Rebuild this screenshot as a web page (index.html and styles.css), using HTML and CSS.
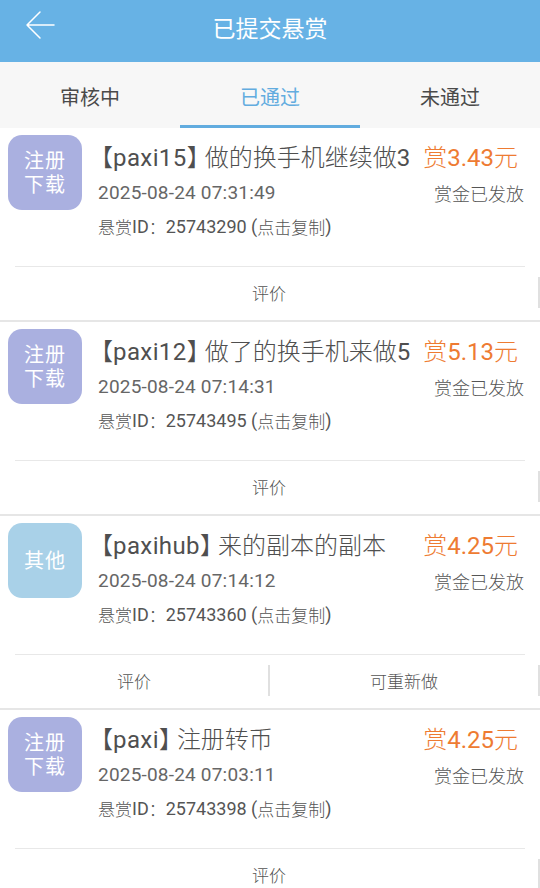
FILE: index.html
```html
<!DOCTYPE html>
<html lang="zh-CN">
<head>
<meta charset="UTF-8">
<meta name="viewport" content="width=device-width, initial-scale=1.0">
<title>已提交悬赏</title>
<link rel="stylesheet" href="styles.css">
</head>
<body>

<div class="topbar">
  <a class="back" href="#">
    <svg width="32" height="30" viewBox="0 0 32 30">
      <path d="M16 2 L3 15 L16 28 M3 15 L30 15" fill="none" stroke="#fff" stroke-width="1.5" stroke-linecap="round" stroke-linejoin="round"/>
    </svg>
  </a>
  <h1>已提交悬赏</h1>
</div>

<div class="tabs">
  <div class="tab">审核中</div>
  <div class="tab active">已通过</div>
  <div class="tab">未通过</div>
</div>

<div class="list">

  <div class="card">
    <div class="card-body">
      <div class="badge badge-reg">注册<br>下载</div>
      <div class="info">
        <div class="row row-title">
          <span class="title"><span class="br-l">【</span><span class="lat">paxi15</span><span class="br-r">】</span>做的换手机继续做<span class="lat">3</span></span>
          <span class="reward">赏<span class="lat">3.43</span>元</span>
        </div>
        <div class="row row-date">
          <span class="date">2025-08-24 07:31:49</span>
          <span class="status">赏金已发放</span>
        </div>
        <div class="row row-id">悬赏<span class="num">ID</span>：<span class="num">25743290 (</span>点击复制<span class="num">)</span></div>
      </div>
    </div>
    <div class="divider"></div>
    <div class="actions">
      <div class="action">评价</div>
    </div>
  </div>

  <div class="card">
    <div class="card-body">
      <div class="badge badge-reg">注册<br>下载</div>
      <div class="info">
        <div class="row row-title">
          <span class="title"><span class="br-l">【</span><span class="lat">paxi12</span><span class="br-r">】</span>做了的换手机来做<span class="lat">5</span></span>
          <span class="reward">赏<span class="lat">5.13</span>元</span>
        </div>
        <div class="row row-date">
          <span class="date">2025-08-24 07:14:31</span>
          <span class="status">赏金已发放</span>
        </div>
        <div class="row row-id">悬赏<span class="num">ID</span>：<span class="num">25743495 (</span>点击复制<span class="num">)</span></div>
      </div>
    </div>
    <div class="divider"></div>
    <div class="actions">
      <div class="action">评价</div>
    </div>
  </div>

  <div class="card">
    <div class="card-body">
      <div class="badge badge-other">其他</div>
      <div class="info">
        <div class="row row-title">
          <span class="title"><span class="br-l">【</span><span class="lat">paxihub</span><span class="br-r">】</span>来的副本的副本</span>
          <span class="reward">赏<span class="lat">4.25</span>元</span>
        </div>
        <div class="row row-date">
          <span class="date">2025-08-24 07:14:12</span>
          <span class="status">赏金已发放</span>
        </div>
        <div class="row row-id">悬赏<span class="num">ID</span>：<span class="num">25743360 (</span>点击复制<span class="num">)</span></div>
      </div>
    </div>
    <div class="divider"></div>
    <div class="actions">
      <div class="action">评价</div>
      <div class="action">可重新做</div>
    </div>
  </div>

  <div class="card">
    <div class="card-body">
      <div class="badge badge-reg">注册<br>下载</div>
      <div class="info">
        <div class="row row-title">
          <span class="title"><span class="br-l">【</span><span class="lat">paxi</span><span class="br-r">】</span>注册转币</span>
          <span class="reward">赏<span class="lat">4.25</span>元</span>
        </div>
        <div class="row row-date">
          <span class="date">2025-08-24 07:03:11</span>
          <span class="status">赏金已发放</span>
        </div>
        <div class="row row-id">悬赏<span class="num">ID</span>：<span class="num">25743398 (</span>点击复制<span class="num">)</span></div>
      </div>
    </div>
    <div class="divider"></div>
    <div class="actions">
      <div class="action">评价</div>
    </div>
  </div>

</div>

</body>
</html>
```

FILE: styles.css
```css
body {
  font-family: Roboto, "Noto Sans CJK SC", sans-serif;
  font-weight: 300;
  margin: 0;
  padding: 0;
  background-color: #fff;
  color: #555;
}
.topbar {
  position: relative;
  height: 62px;
  background-color: #67b2e5;
  display: flex;
  align-items: center;
  justify-content: center;
}
.topbar h1 {
  margin: 0;
  font-size: 23px;
  font-weight: normal;
  color: #fff;
  margin-top: -8px;
}
.back {
  position: absolute;
  left: 24px;
  top: 10px;
  display: block;
  line-height: 0;
}
.tabs {
  display: flex;
  height: 66px;
  background-color: #f7f7f7;
}
.tab {
  flex: 1;
  display: flex;
  align-items: center;
  justify-content: center;
  font-size: 20px;
  font-weight: normal;
  color: #4a4a4a;
  box-sizing: border-box;
  padding-top: 2px;
}
.tab.active {
  color: #62acdf;
  border-bottom: 3px solid #62acdf;
  padding-top: 5px;
}
.card {
  background-color: #fff;
  border-bottom: 2px solid #e6e6e6;
}
.card-body {
  display: flex;
  height: 138px;
  box-sizing: border-box;
  padding: 7px 16px 0 8px;
}
.badge {
  width: 74px;
  height: 75px;
  border-radius: 14px;
  flex-shrink: 0;
  display: flex;
  align-items: center;
  justify-content: center;
  text-align: center;
  color: #fff;
  font-size: 20px;
  font-weight: normal;
  line-height: 24px;
  letter-spacing: 1px;
}
.badge-reg {
  background-color: #aab0e0;
}
.badge-other {
  background-color: #a9d1e8;
}
.info {
  flex: 1;
  min-width: 0;
  margin-left: 16px;
}
.row {
  display: flex;
  align-items: center;
  justify-content: space-between;
}
.row-title {
  height: 38px;
  margin-top: 1px;
}
.title {
  font-size: 24px;
  color: #4f4f4f;
  white-space: nowrap;
}
.lat {
  font-weight: normal;
  letter-spacing: 0.4px;
}
.br-l {
  margin-left: -9px;
}
.br-r {
  letter-spacing: -6px;
}
.reward {
  font-size: 24px;
  color: #ee7b32;
  white-space: nowrap;
  margin-left: 10px;
  margin-right: 6px;
}
.reward .lat {
  letter-spacing: 0;
}
.row-date {
  height: 37px;
}
.date {
  font-size: 19px;
  font-weight: normal;
  letter-spacing: 0.2px;
  color: #666;
}
.status {
  font-size: 18px;
  color: #555;
}
.row-id {
  height: 30px;
  justify-content: flex-start;
  font-size: 17px;
  color: #555;
}
.num {
  font-size: 18px;
  font-weight: normal;
  white-space: pre;
}
.divider {
  height: 1px;
  margin: 0 15px;
  background-color: #e8e8e8;
}
.actions {
  display: flex;
  padding: 10px 0 12px;
}
.action {
  flex: 1;
  height: 31px;
  display: flex;
  align-items: center;
  justify-content: center;
  font-size: 17px;
  color: #555;
  border-right: 2px solid #e0e0e0;
}
```
